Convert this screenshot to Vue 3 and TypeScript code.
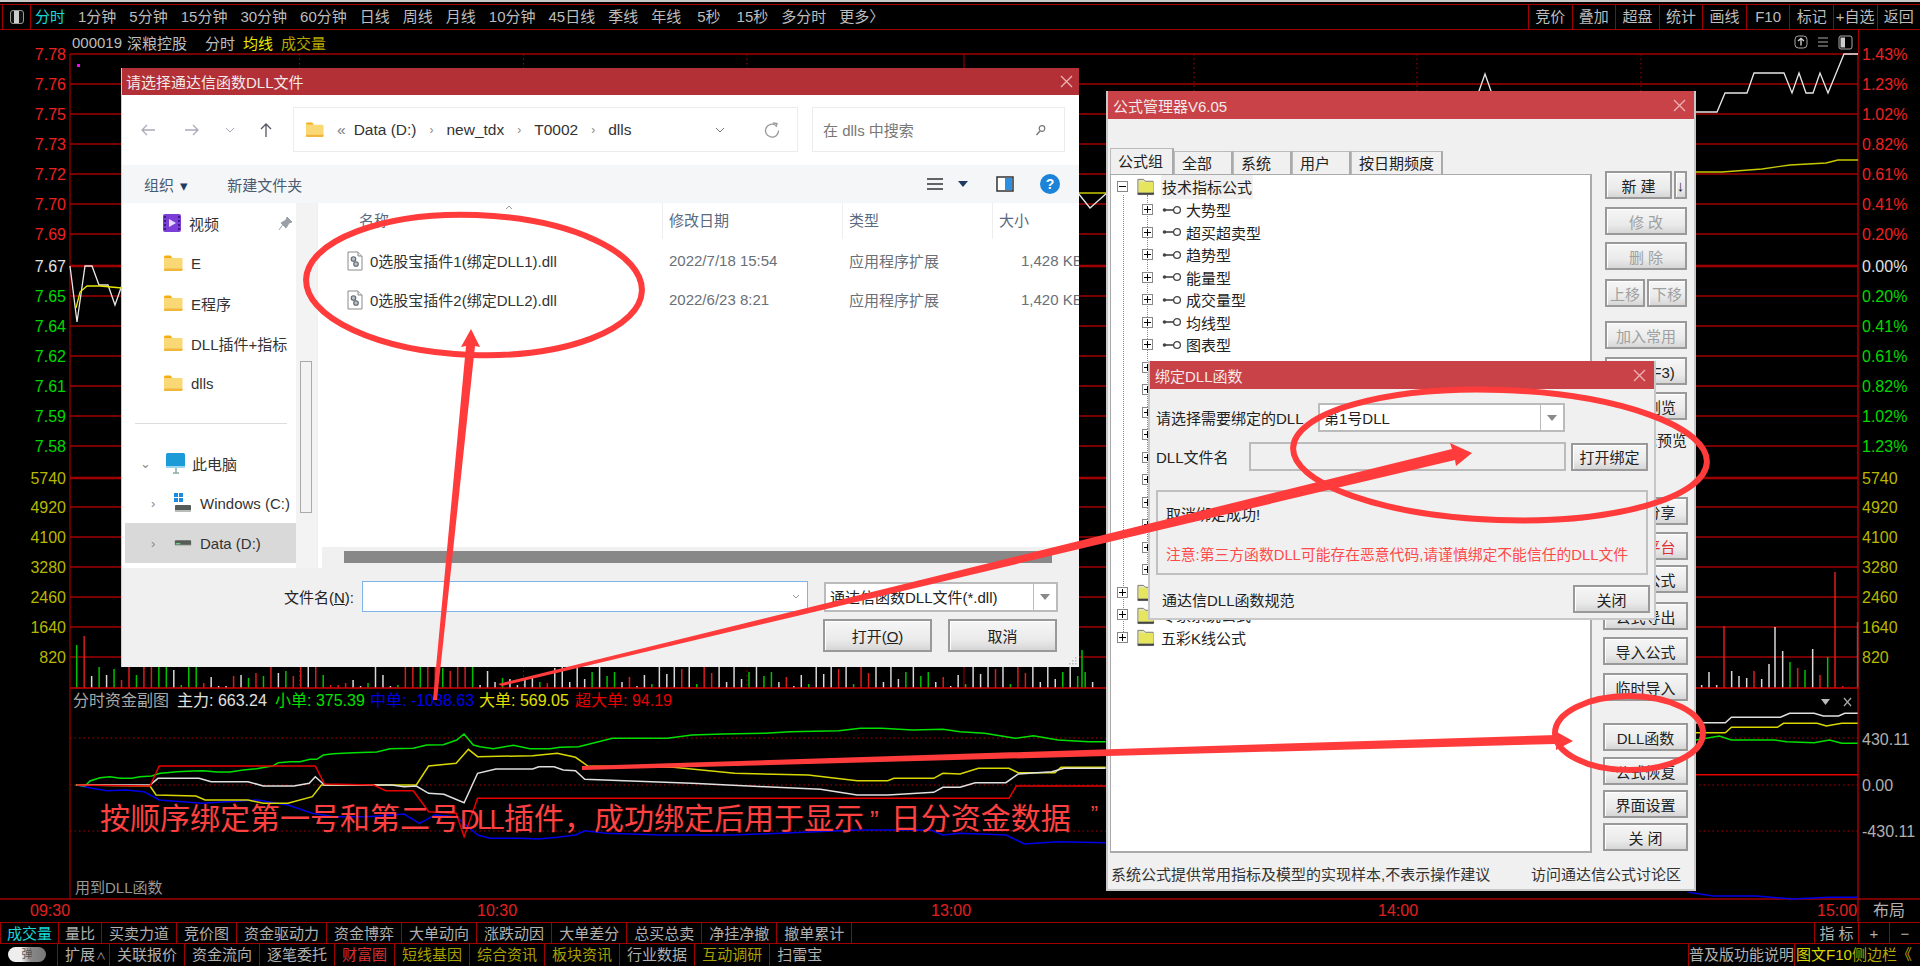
<script setup lang="ts">
type Bar = { x: number; h: number; c: string }

const navItems = ['1分钟', '5分钟', '15分钟', '30分钟', '60分钟', '日线', '周线', '月线', '10分钟', '45日线', '季线', '年线', '5秒', '15秒', '多分时', '更多〉']
const toolItems = ['竞价', '叠加', '超盘', '统计', '画线', 'F10', '标记', '+自选', '返回']

// price axis: [y, left label, right label, colour class]
const priceRows: [number, string, string, string][] = [
  [54, '7.78', '1.43%', 'up'], [84, '7.76', '1.23%', 'up'], [114, '7.75', '1.02%', 'up'],
  [144, '7.73', '0.82%', 'up'], [174, '7.72', '0.61%', 'up'], [204, '7.70', '0.41%', 'up'],
  [234, '7.69', '0.20%', 'up'], [266, '7.67', '0.00%', 'flat'], [296, '7.65', '0.20%', 'down'],
  [326, '7.64', '0.41%', 'down'], [356, '7.62', '0.61%', 'down'], [386, '7.61', '0.82%', 'down'],
  [416, '7.59', '1.02%', 'down'], [446, '7.58', '1.23%', 'down'],
]
const volRows: [number, string][] = [[478, '5740'], [507, '4920'], [537, '4100'], [567, '3280'], [597, '2460'], [627, '1640'], [657, '820']]
const dotted = [299.5, 523.5, 747, 1194, 1417, 1641]
const timeLabels: [number, string][] = [[30, '09:30'], [477, '10:30'], [931, '13:00'], [1378, '14:00'], [1817, '15:00']]

// points were read off the reference, x is squeezed by 1.633 and y by 3 in the crops
function crop(pts: number[], ox: number) {
  const out: string[] = []
  for (let i = 0; i < pts.length; i += 2) {
    out.push(`${(ox + pts[i] / 1.6333).toFixed(1)},${(660 + pts[i + 1] / 3).toFixed(1)}`)
  }
  return out.join(' ')
}
// same, for a crop that was scaled evenly
function even(pts: number[]) {
  const out: string[] = []
  for (let i = 0; i < pts.length; i += 2) {
    out.push(`${(60 + pts[i] / 3).toFixed(1)},${(660 + pts[i + 1] / 3).toFixed(1)}`)
  }
  return out.join(' ')
}
const greenLeft = even([47,375,75,378,90,363,120,353,150,350,180,355,215,355,240,350,275,348,300,340,320,338,350,335,400,333,430,332,470,336,510,336,550,330,590,326,640,317,655,308,690,305,720,305,750,298,770,298,790,285,820,281,880,278,950,276,990,266,1060,265,1100,255,1150,254,1190,240,1212,222,1240,255,1260,260,1300,266,1360,256,1410,266,1470,266,1500,262])
const greenRest = crop([945,260,1000,235,1090,235,1130,225,1180,222,1250,220,1290,215,1370,212,1405,205,1440,205,1490,210,1540,208,1568,215,1608,220,1658,235,1688,227,1728,240,1778,245,1806,245], 0)

const subLines = [
  { c: '#0000e8', p: crop([125,375,150,385,175,392,205,390,235,395,260,420,330,430,420,420,470,435,510,460,545,470,600,470,660,462,685,490,710,465,745,470,780,525,800,535,850,535,880,537,910,532,940,525,955,512,990,520,1080,525,1200,525,1400,510,1520,510,1540,525,1568,520,1643,525,1673,552,1728,545,1806,548], 0) },
  { c: '#0000e8', p: crop([1190,697,1230,708,1300,708,1360,717,1420,712,1466,712], 960) },
  { c: '#00e000', p: `${greenLeft} ${greenRest}` },
  { c: '#00e000', p: crop([1202,240,1240,228,1260,240,1330,240,1350,245,1395,248,1420,240,1440,250,1466,250], 960) },
  { c: '#d8d800', p: crop([125,375,245,378,255,405,320,408,335,420,405,420,430,430,470,430,510,410,525,375,680,375,700,318,745,310,765,268,780,290,870,287,910,280,940,292,960,318,1100,322,1200,340,1320,345,1400,362,1450,362,1460,355,1525,355,1540,340,1568,342,1598,325,1648,325,1663,338,1723,338,1733,322,1806,322], 0) },
  { c: '#d8d800', p: crop([1202,218,1250,218,1260,202,1335,202,1345,190,1400,190,1415,198,1440,190,1466,190], 960) },
  { c: '#e0e0e0', p: crop([125,375,245,375,258,355,325,355,345,365,405,365,430,378,480,378,505,370,515,350,530,375,640,375,660,380,680,378,700,400,725,403,758,428,780,340,810,327,870,327,880,320,905,320,920,330,940,332,955,358,1020,362,1130,370,1250,380,1340,388,1400,405,1450,405,1525,397,1540,382,1568,382,1593,368,1643,368,1663,342,1718,335,1738,325,1806,325], 0) },
  { c: '#e0e0e0', p: crop([1202,188,1250,188,1260,172,1340,172,1355,160,1395,160,1410,168,1435,168,1445,160,1466,160], 960) },
  { c: '#e80000', p: crop([125,375,245,378,260,318,515,318,530,372,610,375,630,392,675,392,690,430,700,455,745,460,758,530,780,415,1648,415,1660,378,1806,378], 0) },
  { c: '#e80000', p: crop([1202,344,1466,344], 960) },
]

const priceLines = [
  { c: '#e8e8e8', p: '70,266 77,322 85,266 92,266 99,285 108,285 115,305 122,285' },
  { c: '#e8e800', p: '76,308 80,292 87,286 100,286 122,288' },
  { c: '#e8e8e8', p: '1078,193 1090,208 1108,192' },
  { c: '#e8e800', p: '1078,193 1108,193' },
  { c: '#e8e8e8', p: '1470,120 1479,91 1485,74 1491,91 1500,120' },
  { c: '#e8e8e8', p: '1695,112 1717,112 1725,93 1747,93 1754,73 1784,73 1792,93 1799,73 1806,93 1813,93 1820,73 1828,93 1844,54 1858,54' },
  { c: '#c8c800', p: '1695,172 1722,172 1762,169 1790,165 1826,163 1838,160 1858,160' },
]

const colors: Record<string, string> = { w: '#d8d8d8', r: '#d81e1e', g: '#00c000' }
// first stretch of the volume bars, colour + height
const leftBars = 'g43 r52 w12 g21 w13 g19 r8 r25 g13 r25 r25 g25 g25 w18 g3 g25 g25 r5 w11 w2 w2 r12 w13 g10 r15 g12 r25 w15 g17 r12 r22 w25 r25 g13 r3 r3 r5 w8 w2 g5 w25 w13 w2 g3 r25 r25 g25 r25 r25 g20 r17 r25 r25 g25 w3 w17 w6 g10 w9 w3 w10 w12 g6 r5 w20'
  .split(' ')
const bars: Bar[] = leftBars.map((b, i) => ({ x: 76.7 + 7.47 * i, h: +b.slice(1), c: colors[b[0]] }))
let seed = 37
for (let i = leftBars.length; i < 137; i++) {
  seed = (seed * 73 + 19) % 211
  bars.push({ x: 76.7 + 7.47 * i, h: 2 + (seed % 24), c: colors['wrgw'[seed % 4]] })
}
bars.push({ x: 1082, h: 38, c: colors.g })
const rightBars: [number, number, string][] = [[65,3,'w'],[87,16,'w'],[110,3,'w'],[132,62,'r'],[155,17,'w'],[177,12,'w'],[200,10,'w'],[222,17,'r'],[245,9,'w'],[267,24,'w'],[285,61,'w'],[308,37,'w'],[330,26,'g'],[353,20,'r'],[375,18,'g'],[398,39,'w'],[420,13,'r'],[443,31,'g'],[465,116,'r'],[488,2,'r'],[533,66,'w']]
for (const [z, h, c] of rightBars) bars.push({ x: 1680 + z / 3, h, c: colors[c] })

const subTabs = ['成交量', '量比', '买卖力道', '竞价图', '资金驱动力', '资金博弈', '大单动向', '涨跌动因', '大单差分', '总买总卖', '净挂净撤', '撤单累计']
const bottomTabs: [string, string][] = [['关联报价', ''], ['资金流向', ''], ['逐笔委托', ''], ['财富圈', 'red'], ['短线基因', 'olive'], ['综合资讯', 'olive'], ['板块资讯', 'olive'], ['行业数据', ''], ['互动调研', 'olive'], ['扫雷宝', '']]

// file dialog
const crumbs = ['Data (D:)', 'new_tdx', 'T0002', 'dlls']
const files = [
  { name: '0选股宝插件1(绑定DLL1).dll', date: '2022/7/18 15:54', size: '1,428 KB' },
  { name: '0选股宝插件2(绑定DLL2).dll', date: '2022/6/23 8:21', size: '1,420 KB' },
]
const quickFolders = ['E', 'E程序', 'DLL插件+指标', 'dlls']

// formula manager button column, gap is the space above each row
type MgrBtn = { label: string; off?: boolean; red?: boolean; cls?: string }
const mgrRows: { gap: number; wide?: boolean; btns: MgrBtn[] }[] = [
  { gap: 52, btns: [{ label: '新 建', cls: 'b-new' }, { label: '↓', cls: 'b-arrow' }] },
  { gap: 8, btns: [{ label: '修 改', off: true }] },
  { gap: 7, btns: [{ label: '删 除', off: true }] },
  { gap: 9, btns: [{ label: '上移', off: true, cls: 'b-half' }, { label: '下移', off: true, cls: 'b-half' }] },
  { gap: 14, btns: [{ label: '加入常用', off: true }] },
  { gap: 8, btns: [{ label: '查找(F3)' }] },
  { gap: 7, btns: [{ label: '公式浏览' }] },
  { gap: 77, wide: true, btns: [{ label: '公式分享' }] },
  { gap: 7, wide: true, btns: [{ label: '公式平台', red: true }] },
  { gap: 5, wide: true, btns: [{ label: '打印公式' }] },
  { gap: 9, wide: true, btns: [{ label: '公式导出' }] },
  { gap: 7, wide: true, btns: [{ label: '导入公式' }] },
  { gap: 8, wide: true, btns: [{ label: '临时导入' }] },
  { gap: 22, wide: true, btns: [{ label: 'DLL函数' }] },
  { gap: 6, wide: true, btns: [{ label: '公式恢复' }] },
  { gap: 5, wide: true, btns: [{ label: '界面设置' }] },
  { gap: 5, wide: true, btns: [{ label: '关 闭' }] },
]

const treeChildren = ['大势型', '超买超卖型', '趋势型', '能量型', '成交量型', '均线型', '图表型', '路径型', '停损型', '交易型', '神系型', '龙系型', '鬼系型', '其它类型', '特色型', '选股型', '指标型']
const treeFolders = ['条件选股公式', '专家系统公式', '五彩K线公式']
</script>

<template>
  <div class="page">
    <svg class="defs" width="0" height="0">
      <symbol id="win-folder" viewBox="0 0 20 18">
        <path d="M1 3 a1.5 1.5 0 0 1 1.5-1.5 h5 l2 2.5 H1z" fill="#f4ae14" />
        <path d="M1 4 h17.5 a1 1 0 0 1 1 1 v10.5 a1.5 1.5 0 0 1-1.5 1.5 H2.5 A1.5 1.5 0 0 1 1 15.5z" fill="#fbd876" />
        <path d="M1 14.5 h18.5 v1 a1.5 1.5 0 0 1-1.5 1.5 H2.5 A1.5 1.5 0 0 1 1 15.5z" fill="#f1b53d" />
      </symbol>
      <symbol id="old-folder" viewBox="0 0 20 20">
        <path d="M2 5 V3 h6 l2 2 h8 v14 H2z" fill="#e4e4a4" stroke="#777" stroke-width="1" />
        <rect x="3" y="6" width="15" height="11" fill="#e6e65e" />
        <rect x="2" y="17" width="17" height="2" fill="#444" />
      </symbol>
      <symbol id="key" viewBox="0 0 20 10">
        <circle cx="2.5" cy="5" r="1.8" fill="#444" />
        <path d="M3 5 h10" stroke="#444" stroke-width="1.6" />
        <circle cx="15" cy="5" r="3.4" fill="#fff" stroke="#444" stroke-width="1.3" />
      </symbol>
      <symbol id="dll-file" viewBox="0 0 16 20">
        <path d="M1 1 h10 l4 4 v14 H1z" fill="#fff" stroke="#8a8a8a" />
        <path d="M11 1 v4 h4" fill="#eee" stroke="#8a8a8a" />
        <circle cx="6.5" cy="8" r="2.3" fill="#b8bec6" stroke="#606870" stroke-width="1.1" />
        <circle cx="9" cy="13" r="2.3" fill="#b8bec6" stroke="#606870" stroke-width="1.1" />
      </symbol>
      <symbol id="drive" viewBox="0 0 20 8">
        <rect x="1" y="1" width="18" height="6" rx="1" fill="#565c58" />
        <rect x="2" y="4" width="5" height="1.5" fill="#6fd084" />
        <rect x="1" y="6" width="18" height="1.5" fill="#b9bdb9" />
      </symbol>
    </svg>

    <!-- top menu -->
    <header class="toolbar">
      <div class="tb-icon"><span class="tb-glyph"></span></div>
      <nav class="tb-nav">
        <span class="tb-active">分时</span>
        <span v-for="n in navItems" :key="n">{{ n }}</span>
      </nav>
      <div class="tb-tools">
        <span v-for="t in toolItems" :key="t">{{ t }}</span>
      </div>
    </header>

    <div class="quote-row">
      <span>000019</span>
      <span class="q-name">深粮控股</span>
      <span class="q-gap">分时</span>
      <span class="q-gap2 q-yellow">均线</span>
      <span class="q-gap2 q-olive">成交量</span>
      <div class="q-icons">
        <svg width="14" height="14" viewBox="0 0 14 14"><rect x="1" y="1" width="12" height="12" rx="3.5" fill="none" stroke="#aaa" /><path d="M7 3.5 V10.5 M4 6 L7 3.500 L10 6" fill="none" stroke="#ccc" stroke-width="1.4" /></svg>
        <svg width="12" height="12" viewBox="0 0 12 12"><path d="M1 2 H11 M1 6 H11 M1 10 H11" stroke="#aaa" stroke-width="1.2" /></svg>
        <svg width="15" height="15" viewBox="0 0 15 15"><rect x="1" y="1" width="13" height="13" rx="2" fill="none" stroke="#aaa" /><rect x="2.5" y="2.5" width="4.5" height="10" fill="#ccc" /></svg>
      </div>
    </div>

    <!-- chart canvas, drawn in page coordinates -->
    <svg class="chart" viewBox="0 54 1920 868" width="1920" height="868">
      <g stroke="#a00000">
        <line v-for="r in priceRows" :key="r[0]" x1="70" x2="1858" :y1="r[0]" :y2="r[0]" :stroke-width="r[0] === 266 ? 2.5 : 1.5" />
        <line v-for="r in volRows" :key="r[1]" x1="70" x2="1858" :y1="r[0]" :y2="r[0]" :stroke-width="r[0] === 478 ? 2.5 : 1.5" />
      </g>
      <g stroke="#b00000" stroke-dasharray="1.5 3">
        <line v-for="x in dotted" :key="x" :x1="x" :x2="x" y1="54" y2="688" />
        <line x1="70" x2="1858" y1="738" y2="738" />
        <line x1="70" x2="1858" y1="785" y2="785" />
        <line x1="70" x2="1858" y1="831" y2="831" />
      </g>
      <line x1="964" x2="964" y1="54" y2="688" stroke="#a00000" />
      <line v-for="(b, i) in bars" :key="i" :x1="b.x" :x2="b.x" :y1="688" :y2="688 - b.h" :stroke="b.c" stroke-width="1.5" />
      <line x1="70" x2="1858" y1="688" y2="688" stroke="#d00000" stroke-width="1.5" />
      <line x1="0" x2="1920" y1="899" y2="899" stroke="#a00000" stroke-width="1.5" />
      <line x1="70" x2="70" y1="54" y2="899" stroke="#a00000" stroke-width="1.2" />
      <line x1="1858" x2="1858" y1="54" y2="922" stroke="#a00000" stroke-width="1.5" />
      <polyline v-for="(l, i) in priceLines" :key="i" :points="l.p" fill="none" :stroke="l.c" stroke-width="1.3" />
      <polyline v-for="(l, i) in subLines" :key="i" :points="l.p" fill="none" :stroke="l.c" stroke-width="1.5" />
      <rect x="77" y="64" width="3" height="3" fill="#ff00ff" />

      <g class="ax">
        <template v-for="r in priceRows" :key="r[0]">
          <text x="66" :y="r[0] + 6" text-anchor="end" :class="r[3]">{{ r[1] }}</text>
          <text x="1862" :y="r[0] + 6" :class="r[3]">{{ r[2] }}</text>
        </template>
        <template v-for="r in volRows" :key="r[1]">
          <text x="66" :y="r[0] + 6" text-anchor="end" class="vol">{{ r[1] }}</text>
          <text x="1862" :y="r[0] + 6" class="vol">{{ r[1] }}</text>
        </template>
        <text x="1862" y="745" class="flat2">430.11</text>
        <text x="1862" y="791" class="flat2">0.00</text>
        <text x="1862" y="837" class="flat2">-430.11</text>
        <text v-for="t in timeLabels" :key="t[1]" :x="t[0]" y="916" class="time">{{ t[1] }}</text>
        <text x="1873" y="916" class="flat2">布局</text>
        <text y="706" class="sub-h">
          <tspan x="73" fill="#a8a8a8">分时资金副图</tspan>
          <tspan x="177" fill="#e0e0e0">主力: 663.24</tspan>
          <tspan x="275" fill="#00e000">小单: 375.39</tspan>
          <tspan x="370" fill="#0000e8">中单: -1038.63</tspan>
          <tspan x="479" fill="#e0e000">大单: 569.05</tspan>
          <tspan x="575" fill="#e80000">超大单: 94.19</tspan>
        </text>
        <text x="75" y="893" class="flat3">用到DLL函数</text>
      </g>
      <path d="M1821 699 h9 l-4.5 6z" fill="#bbb" />
      <path d="M1844 698 l7 8 M1851 698 l-7 8" stroke="#aaa" stroke-width="1.2" />
    </svg>

    <div class="tabs">
      <span v-for="(t, i) in subTabs" :key="t" :class="{ 'tab-on': i === 0 }">{{ t }}</span>
      <span class="tabs-end">指 标</span>
      <span class="tabs-sq">+</span>
      <span class="tabs-sq">−</span>
    </div>

    <div class="bottom">
      <div class="toggle"><span class="toggle-knob">弹</span></div>
      <span class="b-first">扩展<small>∧</small></span>
      <span v-for="t in bottomTabs" :key="t[0]" :class="t[1]">{{ t[0] }}</span>
      <div class="b-right">
        <span>普及版功能说明</span>
        <span class="yellow">图文F10</span><span class="olive2">侧边栏</span><span class="olive2">《</span>
      </div>
    </div>

    <!-- file open dialog -->
    <section class="win file-win">
      <div class="title dark"><span>请选择通达信函数DLL文件</span><svg class="x" width="13" height="13" viewBox="0 0 13 13"><path d="M1 1 L12 12 M12 1 L1 12" /></svg></div>
      <div class="fw-nav">
        <svg class="n-back" width="16" height="14" viewBox="0 0 16 14"><path d="M15 7 H2 M7 2 L2 7 L7 12" fill="none" stroke="#aab" stroke-width="1.3" /></svg>
        <svg class="n-fwd" width="16" height="14" viewBox="0 0 16 14"><path d="M1 7 H14 M9 2 L14 7 L9 12" fill="none" stroke="#aab" stroke-width="1.3" /></svg>
        <svg class="n-down" width="10" height="6" viewBox="0 0 10 6"><path d="M1 1 L5 5 L9 1" fill="none" stroke="#aab" /></svg>
        <svg class="n-up" width="14" height="16" viewBox="0 0 14 16"><path d="M7 15 V2 M2 7 L7 2 L12 7" fill="none" stroke="#556" stroke-width="1.3" /></svg>
        <div class="addr">
          <svg width="19" height="17"><use href="#win-folder" /></svg>
          <span class="ad-more">«</span>
          <template v-for="(c, i) in crumbs" :key="c">
            <span class="crumb">{{ c }}</span>
            <i v-if="i < crumbs.length - 1" class="sep">›</i>
          </template>
          <svg class="ad-drop" width="10" height="6" viewBox="0 0 10 6"><path d="M1 1 L5 5 L9 1" fill="none" stroke="#778" /></svg>
          <svg class="ad-ref" width="16" height="18" viewBox="0 0 16 18"><path d="M12 4.5 A6.5 6.5 0 1 0 14.5 9.5" fill="none" stroke="#999" stroke-width="1.3" /><path d="M9 2 L13 2.5 L12 6" fill="none" stroke="#999" stroke-width="1.3" /></svg>
        </div>
        <div class="search">
          <span>在 dlls 中搜索</span>
          <svg width="11" height="12" viewBox="0 0 11 12"><circle cx="7" cy="4.5" r="2.8" fill="none" stroke="#777" stroke-width="1.2" /><path d="M5 7 L1.5 11" stroke="#777" stroke-width="1.4" /></svg>
        </div>
      </div>
      <div class="fw-tools">
        <span>组织 <i class="tri">▾</i></span>
        <span class="new-folder">新建文件夹</span>
        <div class="fw-tools-r">
          <svg width="16" height="14" viewBox="0 0 16 14"><path d="M0 2 H16 M0 7 H16 M0 12 H16" stroke="#333" stroke-width="1.6" /></svg>
          <svg class="t-arrow" width="10" height="6" viewBox="0 0 10 6"><path d="M0 0 H10 L5 6z" fill="#1f3b63" /></svg>
          <svg class="t-pane" width="18" height="16" viewBox="0 0 18 16"><rect x="1" y="1" width="16" height="14" fill="#fff" stroke="#333" stroke-width="1.5" /><rect x="9" y="2" width="7" height="12" fill="#2d8fe0" /></svg>
          <svg class="t-help" width="20" height="20" viewBox="0 0 20 20"><circle cx="10" cy="10" r="10" fill="#1b84d8" /><text x="10" y="15" text-anchor="middle" class="t-q">?</text></svg>
        </div>
      </div>
      <div class="fw-body">
        <aside class="side">
          <div class="s-row s-quick">
            <svg width="18" height="18" viewBox="0 0 18 18"><rect width="18" height="18" rx="2" fill="#7b3fd8" /><path d="M6 5 L13 9 L6 13z" fill="#e8dcff" /><path d="M2 2 V16 M16 2 V16" stroke="#3a1c80" stroke-width="2" stroke-dasharray="2 2" /></svg>
            <span>视频</span>
            <svg class="pin" width="13" height="13" viewBox="0 0 13 13"><path d="M8 0 L13 5 L10 6 L7 11 L2 6 L7 3z M3.5 8 L0 13" fill="#9aa0a6" stroke="#9aa0a6" /></svg>
          </div>
          <div v-for="f in quickFolders" :key="f" class="s-row s-quick">
            <svg width="20" height="18"><use href="#win-folder" /></svg>
            <span>{{ f }}</span>
          </div>
          <div class="s-row s-div"><hr /></div>
          <div class="s-row s-pc">
            <i class="chev">⌄</i>
            <svg width="21" height="21" viewBox="0 0 21 21"><rect x="1" y="0" width="19" height="15" rx="1.5" fill="#1d9bd8" /><rect x="1" y="13" width="19" height="2" fill="#9fd6ef" /><path d="M8 20 H14 M11 15 V20" stroke="#8aa" stroke-width="1.5" /></svg>
            <span>此电脑</span>
          </div>
          <div class="s-row s-drive">
            <i class="chev">›</i>
            <svg width="18" height="20" viewBox="0 0 18 20"><g fill="#1a8ce0"><rect x="0" y="0" width="4" height="4" /><rect x="5" y="0" width="4" height="4" /><rect x="0" y="5" width="4" height="4" /><rect x="5" y="5" width="4" height="4" /></g><rect x="1" y="12" width="16" height="6" rx="1" fill="#565c58" /><rect x="1" y="17" width="16" height="2" fill="#b9bdb9" /></svg>
            <span>Windows (C:)</span>
          </div>
          <div class="s-row s-drive s-sel">
            <i class="chev">›</i>
            <svg width="18" height="8"><use href="#drive" /></svg>
            <span>Data (D:)</span>
          </div>
        </aside>
        <div class="side-track"><span class="side-thumb"></span></div>
        <div class="list">
          <div class="l-head">
            <span class="h-name">名称</span><span>修改日期</span><span>类型</span><span>大小</span>
            <svg class="sort" width="8" height="5" viewBox="0 0 8 5"><path d="M1 4 L4 1 L7 4" fill="none" stroke="#999" /></svg>
          </div>
          <div v-for="f in files" :key="f.name" class="l-row">
            <span class="r-name"><svg width="16" height="20"><use href="#dll-file" /></svg><b>{{ f.name }}</b></span>
            <span>{{ f.date }}</span>
            <span>应用程序扩展</span>
            <span class="r-size">{{ f.size }}</span>
          </div>
          <div class="h-track"><span class="h-thumb"></span></div>
        </div>
      </div>
      <div class="fw-foot">
        <div class="ff-row">
          <label>文件名(<u>N</u>):</label>
          <div class="ff-input"><svg width="8" height="5" viewBox="0 0 8 5"><path d="M1 1 L4 4 L7 1" fill="none" stroke="#999" /></svg></div>
          <div class="combo ff-type"><span>通达信函数DLL文件(*.dll)</span><i class="combo-btn"><em></em></i></div>
        </div>
        <div class="ff-btns">
          <button class="btn">打开(<u>O</u>)</button>
          <button class="btn">取消</button>
        </div>
        <svg class="grip" width="9" height="9" viewBox="0 0 9 9"><path d="M7 1 h1.5 v1.5 h-1.5z M4 4 h1.5 v1.5 h-1.5z M7 4 h1.5 v1.5 h-1.5z M1 7 h1.5 v1.5 h-1.5z M4 7 h1.5 v1.5 h-1.5z M7 7 h1.5 v1.5 h-1.5z" fill="#bbb" /></svg>
      </div>
    </section>

    <!-- formula manager -->
    <section class="win mgr">
      <div class="title"><span>公式管理器V6.05</span><svg class="x" width="13" height="13" viewBox="0 0 13 13"><path d="M1 1 L12 12 M12 1 L1 12" /></svg></div>
      <div class="mgr-body">
        <div class="mgr-left">
          <div class="m-tabs">
            <span class="m-tab on">公式组</span><span class="m-tab">全部</span><span class="m-tab">系统</span><span class="m-tab">用户</span><span class="m-tab">按日期频度</span>
          </div>
          <div class="tree">
            <i class="dots d1"></i><i class="dots d2"></i>
            <div class="t-row t-root t-first">
              <span class="box minus"></span>
              <svg width="19" height="20"><use href="#old-folder" /></svg>
              <span class="t-sel">技术指标公式</span>
            </div>
            <div v-for="c in treeChildren" :key="c" class="t-row t-child">
              <span class="box plus"></span>
              <svg width="20" height="10"><use href="#key" /></svg>
              <span>{{ c }}</span>
            </div>
            <div v-for="c in treeFolders" :key="c" class="t-row t-root">
              <span class="box plus"></span>
              <svg width="19" height="20"><use href="#old-folder" /></svg>
              <span>{{ c }}</span>
            </div>
          </div>
        </div>
        <div class="mgr-btns">
          <div v-for="(row, i) in mgrRows" :key="i" class="m-row" :class="{ wide: row.wide }" :style="{ marginTop: row.gap + 'px' }">
            <button v-for="b in row.btns" :key="b.label" class="btn" :class="[b.cls, { off: b.off, redtxt: b.red }]">{{ b.label }}</button>
          </div>
          <span class="preview">指标预览</span>
        </div>
      </div>
      <div class="mgr-foot">
        <span>系统公式提供常用指标及模型的实现样本,不表示操作建议</span>
        <span>访问通达信公式讨论区</span>
      </div>
    </section>

    <!-- bind dialog -->
    <section class="win bind">
      <div class="title"><span>绑定DLL函数</span><svg class="x" width="13" height="13" viewBox="0 0 13 13"><path d="M1 1 L12 12 M12 1 L1 12" /></svg></div>
      <div class="bind-body">
        <div class="b-row r1">
          <label class="l1">请选择需要绑定的DLL</label>
          <div class="combo b-combo"><span>第1号DLL</span><i class="combo-btn"><em></em></i></div>
        </div>
        <div class="b-row r2">
          <label class="l2">DLL文件名</label>
          <div class="b-field"></div>
          <button class="btn b-open">打开绑定</button>
        </div>
        <div class="b-group">
          <span>取消绑定成功!</span>
          <span class="warn">注意:第三方函数DLL可能存在恶意代码,请谨慎绑定不能信任的DLL文件</span>
        </div>
        <div class="b-foot">
          <span>通达信DLL函数规范</span>
          <button class="btn b-open">关闭</button>
        </div>
      </div>
    </section>

    <!-- hand-drawn marks over everything -->
    <svg class="marks" width="1920" height="966" viewBox="0 0 1920 966">
      <g fill="none" stroke="#ff3b3b" stroke-width="6">
        <ellipse cx="474" cy="285" rx="168" ry="70" transform="rotate(2 474 285)" />
        <ellipse cx="1500" cy="455" rx="207" ry="65" transform="rotate(2 1500 455)" />
        <ellipse cx="1629" cy="733" rx="74" ry="37" />
      </g>
      <g fill="#ff3b3b">
        <path d="M433 700 L466 346 L461 347 L471 329 L480 347 L475 346 L437 700z" />
        <path d="M498 684 L1452 449 L1450 443 L1472 453 L1456 466 L1455 460 L502 686z" />
        <path d="M582 766 L1556 735 L1555 731 L1573 741 L1556 750 L1556 744 L582 770z" />
      </g>
    </svg>
    <div class="headline">按顺序绑定第一号和第二号<span class="h-dll">DLL</span>插件，成功绑定后用于显示<span class="h-q">”</span>日分资金数据<span class="h-q2">”</span></div>
  </div>
</template>

<style>
html, body { margin: 0; background: #000; }
</style>

<style scoped>
.page {
  position: relative;
  width: 1920px;
  height: 966px;
  overflow: hidden;
  background: #000;
  color: #bdbdbd;
  font: 15px "Liberation Sans", "Noto Sans CJK SC", sans-serif;
  border-top: 2px solid #c8c8c8;
  box-sizing: border-box;
}
.defs { position: absolute; }

.toolbar {
  display: flex;
  box-sizing: border-box;
  height: 26px;
  margin-top: 2px;
  border-top: 1.5px solid #a00000;
  border-bottom: 1.5px solid #a00000;
  white-space: nowrap;
  line-height: 23px;
}
.tb-icon {
  width: 29px;
  margin-left: 2px;
  box-sizing: border-box;
  border-left: 1px solid #a00000;
  border-right: 1.5px solid #a00000;
  display: flex;
  align-items: center;
  justify-content: center;
}
.tb-glyph {
  width: 14px;
  height: 14px;
  box-sizing: border-box;
  border: 1.5px solid #999;
  border-radius: 3px;
  background: linear-gradient(90deg, #111 0 3px, #ccc 3px 8px, #111 8px);
}
.tb-nav { display: flex; gap: 13px; padding-left: 4px; }
.tb-nav span:nth-child(14), .tb-nav span:nth-child(15) { margin-left: 3px; }
.tb-active { color: #19d8d8; }
.tb-tools { margin-left: auto; width: 392px; display: flex; }
.tb-tools span { flex: 1; text-align: center; border-left: 1px solid #a00000; }

.quote-row {
  display: flex;
  align-items: center;
  height: 24px;
  padding-left: 72px;
  padding-right: 61px;
  color: #bdbdbd;
}
.q-name { margin-left: 5px; }
.q-gap { margin-left: 18px; }
.q-gap2 { margin-left: 8px; }
.q-yellow { color: #e8e800; }
.q-olive { color: #b8a800; }
.q-icons {
  margin-left: auto;
  height: 24px;
  display: flex;
  align-items: center;
  gap: 9px;
  box-sizing: border-box;
  border-right: 1.5px solid #a00000;
  padding-right: 5px;
}

.chart { display: block; overflow: visible; }
.ax text { font-size: 16px; }
.ax .up { fill: #ee2020; }
.ax .flat { fill: #e0e0e0; }
.ax .down { fill: #00d800; }
.ax .vol { fill: #b8b800; }
.ax .flat2 { fill: #b0b0b0; }
.ax .flat3 { fill: #999; font-size: 15px; }
.ax .time { fill: #e02020; }

.tabs, .bottom {
  display: flex;
  box-sizing: border-box;
  height: 22px;
  white-space: nowrap;
  line-height: 21px;
}
.tabs { border-top: 1.5px solid #a00000; border-bottom: 1.5px solid #a00000; }
.tabs > span { padding: 0 7px; border-left: 1px solid #a00000; color: #b0b0b0; }
.tabs > span.tab-on { color: #19d8d8; padding: 0 6px; }
.tabs > span:nth-child(2) { padding: 0 6px; }
.tabs > span:nth-child(12) { border-right: 1px solid #a00000; }
.tabs > span.tabs-end { margin-left: auto; width: 44px; box-sizing: border-box; text-align: center; padding: 0; }
.tabs > span.tabs-sq { width: 31px; box-sizing: border-box; padding: 0; text-align: center; }

.bottom > span { padding: 0 7px; border-left: 1px solid #a00000; color: #b0b0b0; }
.bottom small { font-size: 10px; margin-left: 1px; }
.bottom > .b-first { width: 52px; box-sizing: border-box; }
.bottom > .red { color: #d83030; }
.bottom > .olive { color: #a8a000; }
.toggle {
  display: flex;
  align-items: flex-start;
  width: 55px;
  padding: 3px 0 0 6px;
  box-sizing: border-box;
  margin-left: 2px;
}
.toggle-knob {
  width: 38px;
  height: 15px;
  border-radius: 8px;
  background: linear-gradient(90deg, #eee 0 35%, #888 60%, #777);
  font-size: 11px;
  line-height: 15px;
  text-align: center;
  color: #555;
}
.b-right { margin-left: auto; display: flex; width: 231px; overflow: hidden; border-left: 1px solid #a00000; color: #b0b0b0; }
.b-right .yellow { border-left: 1px solid #a00000; padding-left: 1px; color: #d8d800; }
.b-right .olive2 { color: #b8a800; }

/* windows */
.win { position: absolute; background: #f0f0f0; color: #222; box-sizing: border-box; }
.title {
  display: flex;
  align-items: center;
  justify-content: space-between;
  height: 28px;
  padding: 0 8px 0 5px;
  background: #c94248;
  color: #f2eaea;
  box-sizing: border-box;
  flex: none;
}
.title.dark { background: #b33036; height: 27px; padding: 0 6px 0 4px; }
.x { stroke: #eeb4b4; stroke-width: 1.3; }

.btn {
  font: inherit;
  color: #222;
  padding: 0;
  box-sizing: border-box;
  border: 2px solid #999;
  background: linear-gradient(#f6f6f6, #eaeaea 65%, #d6d6d6);
  box-shadow: inset 1px 1px 0 #fff;
}
.btn.off { color: #a0a0a0; }
.btn u { text-decoration: underline; }

.combo {
  display: flex;
  box-sizing: border-box;
  background: #fff;
  border: 2px solid #bbb;
  align-items: center;
  padding-left: 4px;
  white-space: nowrap;
  overflow: hidden;
}
.combo span { flex: 1; overflow: hidden; }
.combo-btn {
  width: 22px;
  align-self: stretch;
  border-left: 1px solid #bbb;
  display: flex;
  align-items: center;
  justify-content: center;
  flex: none;
}
.combo-btn em { border: 5px solid transparent; border-top: 6px solid #888; border-bottom: 0; }

/* file dialog */
.file-win {
  left: 121px;
  top: 66px;
  width: 958px;
  height: 599px;
  display: flex;
  flex-direction: column;
  border-left: 1px solid #ccc;
}
.fw-nav { display: flex; align-items: center; height: 70px; box-sizing: border-box; padding-bottom: 1px; background: #fff; flex: none; }
.n-back { margin-left: 18px; }
.n-fwd { margin-left: 28px; }
.n-down { margin-left: 25px; }
.n-up { margin-left: 24px; }
.addr {
  display: flex;
  align-items: center;
  margin-left: 20px;
  width: 505px;
  height: 45px;
  box-sizing: border-box;
  border: 1.5px solid #ececec;
  padding: 0 17px 0 11px;
  gap: 13px;
  font-size: 15.5px;
  color: #333;
}
.ad-more { color: #777; margin-right: -5px; }
.sep { color: #888; font-size: 12px; font-style: normal; }
.ad-drop { margin-left: auto; }
.ad-ref { margin-left: 26px; }
.search {
  display: flex;
  align-items: center;
  justify-content: space-between;
  margin-left: 14px;
  width: 253px;
  height: 45px;
  box-sizing: border-box;
  border: 1.5px solid #ececec;
  padding: 0 18px 0 10px;
  color: #777;
}
.fw-tools {
  display: flex;
  align-items: center;
  height: 38px;
  flex: none;
  background: #f5f6f7;
  padding-left: 22px;
  color: #4a5a72;
}
.tri { font-style: normal; font-size: 15px; color: #1f3b63; margin-left: 2px; }
.new-folder { margin-left: 39px; }
.fw-tools-r { margin-left: auto; display: flex; align-items: center; padding-right: 19px; }
.t-arrow { margin-left: 15px; }
.t-pane { margin-left: 28px; }
.t-help { margin-left: 26px; }
.t-q { fill: #fff; font: bold 14px "Liberation Sans", sans-serif; }

.fw-body { display: flex; height: 365px; flex: none; background: #fff; }
.side { width: 174px; flex: none; }
.s-row { display: flex; align-items: center; height: 40px; color: #333; white-space: nowrap; box-sizing: border-box; }
.s-quick { padding-left: 41px; gap: 8px; position: relative; }
.pin { position: absolute; right: 4px; }
.s-div hr { width: 152px; margin: 0 0 0 13px; border: 0; border-top: 1.5px solid #ddd; }
.s-pc { padding-left: 18px; }
.s-pc span { margin-left: 6px; }
.chev { font-style: normal; color: #888; font-size: 13px; width: 25px; }
.s-drive { padding-left: 29px; }
.s-drive .chev { width: 23px; }
.s-drive span { margin-left: 8px; }
.s-sel { background: #d9d9d9; margin-left: 3px; padding-left: 26px; }
.side-track { width: 21px; flex: none; background: #f3f3f3; position: relative; border-right: 1px solid #f0f0f0; }
.side-thumb {
  position: absolute;
  left: 4px;
  top: 158px;
  width: 12px;
  height: 152px;
  box-sizing: border-box;
  border: 1px solid #aaa;
  background: #f3f3f3;
}
.list { flex: 1; display: flex; flex-direction: column; overflow: hidden; position: relative; margin-left: 4px; color: #6a7078; }
.l-head, .l-row { display: grid; grid-template-columns: 341px 180px 150px 88px; flex: none; }
.l-head { height: 32px; align-items: stretch; line-height: 36px; color: #5a6a80; margin-bottom: 6px; }
.l-head span { padding-left: 6px; border-right: 1px solid #eee; }
.l-head .h-name { padding-left: 37px; }
.sort { position: absolute; left: 183px; top: 2px; }
.l-row { height: 39px; align-items: center; white-space: nowrap; }
.l-row > span { padding-left: 6px; }
.l-row > .r-name { display: flex; align-items: center; gap: 7px; padding-left: 25px; }
.r-name b { font-weight: 400; color: #333; font-size: 15px; }
.l-row > .r-size { padding-left: 28px; }
.h-track { margin-top: auto; height: 21px; background: #f0f0f0; padding: 4px 0 0 22px; box-sizing: border-box; flex: none; }
.h-thumb { display: block; width: 708px; height: 12px; background: #888; }

.fw-foot { flex: 1; position: relative; background: #f0f0f0; }
.ff-row { display: flex; align-items: center; padding: 13px 0 0 162px; }
.ff-row label { width: 78px; white-space: nowrap; }
.ff-input {
  width: 446px;
  height: 31px;
  box-sizing: border-box;
  border: 1px solid #7eb4ea;
  background: #fff;
  display: flex;
  align-items: center;
  justify-content: flex-end;
  padding-right: 7px;
}
.ff-type { width: 234px; height: 30px; margin-left: 16px; }
.ff-btns { display: flex; justify-content: flex-end; gap: 16px; padding: 7px 22px 0 0; }
.ff-btns .btn { width: 109px; height: 33px; }
.grip { position: absolute; right: 2px; bottom: 2px; }

/* formula manager */
.mgr {
  left: 1106px;
  top: 89px;
  width: 590px;
  height: 800px;
  display: flex;
  flex-direction: column;
  border: 2px solid #c8c8c8;
  border-top: 0;
}
.mgr-body { display: flex; height: 734px; flex: none; }
.mgr-left { width: 484px; padding-left: 2px; flex: none; box-sizing: border-box; }
.m-tabs { display: flex; align-items: flex-end; height: 55px; }
.m-tab {
  height: 23px;
  line-height: 24px;
  padding: 0 7px;
  box-sizing: border-box;
  background: #f0f0f0;
  border: 1px solid #bbb;
  border-bottom: 0;
  border-right-width: 2px;
  border-right-color: #aaa;
  white-space: nowrap;
}
.m-tab:nth-child(2), .m-tab:nth-child(3), .m-tab:nth-child(4) { width: 59px; }
.m-tab.on { height: 26px; width: 64px; line-height: 26px; }
.tree {
  position: relative;
  height: 679px;
  box-sizing: border-box;
  background: #fff;
  border: solid #aaa;
  border-width: 1px 2px 2px 1px;
  padding-top: 1px;
  overflow: hidden;
}
.dots { position: absolute; border-left: 1px dotted #888; }
.d1 { left: 12px; top: 20px; height: 445px; }
.d2 { left: 36px; top: 20px; height: 378px; }
.t-row { display: flex; align-items: center; height: 22.5px; white-space: nowrap; position: relative; color: #222; }
.t-first { height: 24.5px; margin-top: -2px; }
.t-root { padding-left: 6px; }
.t-child { padding-left: 31px; }
.box {
  width: 11px;
  height: 11px;
  box-sizing: border-box;
  border: 1px solid #888;
  background: #fff;
  flex: none;
  position: relative;
}
.box::before { content: ""; position: absolute; left: 1px; right: 1px; top: 4px; height: 1px; background: #000; }
.plus::after { content: ""; position: absolute; top: 1px; bottom: 1px; left: 4px; width: 1px; background: #000; }
.t-root svg { margin-left: 8px; flex: none; }
.t-root span:last-child { margin-left: 6px; }
.t-child svg { margin-left: 9px; flex: none; }
.t-child span:last-child { margin-left: 4px; }
.t-sel { background: #f0f0f0; padding: 2px 1px; }

.mgr-btns { width: 104px; position: relative; padding-left: 13px; box-sizing: border-box; }
.m-row { display: flex; justify-content: space-between; width: 82px; height: 28px; }
.m-row .btn { flex: 1; white-space: nowrap; overflow: hidden; }
.m-row.wide { width: 85px; margin-left: -2px; }
.m-row .btn.b-new { flex: none; width: 67px; }
.m-row .btn.b-arrow { flex: none; width: 13px; font-size: 15px; }
.m-row .btn.b-half { flex: none; width: 40px; }
.redtxt { color: #e03030; }
.preview { position: absolute; left: 13px; top: 310px; width: 82px; text-align: right; white-space: nowrap; color: #222; }
.mgr-foot { display: flex; justify-content: space-between; padding: 10px 13px 0 3px; white-space: nowrap; color: #333; }

/* bind dialog */
.bind { left: 1148px; top: 359px; width: 508px; height: 259px; border: 2px solid #c8c8c8; border-top: 0; }
.bind-body { padding: 0 6px; }
.b-row { display: flex; align-items: center; height: 29px; white-space: nowrap; }
.r1 { margin-top: 14px; }
.r2 { margin-top: 10px; }
.l1 { width: 162px; }
.l2 { width: 93px; }
.b-combo { width: 247px; height: 29px; }
.b-field { width: 318px; height: 29px; box-sizing: border-box; border: 2px solid #bbb; background: #f0f0f0; }
.b-open { width: 77px; height: 28px; margin-left: 5px; white-space: nowrap; flex: none; }
.b-group {
  margin-top: 19px;
  height: 85px;
  width: 492px;
  box-sizing: border-box;
  border: 2px solid #c0c0c0;
  display: flex;
  flex-direction: column;
  padding: 11px 7px 0 8px;
  gap: 19px;
}
.warn { color: #ff4a4a; white-space: nowrap; font-size: 14.8px; }
.b-foot { display: flex; justify-content: space-between; align-items: center; margin-top: 10px; padding-left: 6px; width: 494px; box-sizing: border-box; }

/* annotation layer */
.marks { position: absolute; left: 0; top: -2px; pointer-events: none; }
.headline {
  position: absolute;
  left: 100px;
  top: 796px;
  font-size: 30px;
  line-height: 42px;
  color: #ff4040;
  white-space: nowrap;
}
.h-dll { font-size: 27px; letter-spacing: -2.5px; margin-right: 2px; }
.h-q { margin: 0 12px 0 6px; font-size: 26px; }
.h-q2 { font-size: 22px; margin-left: 20px; position: relative; top: -8px; }
</style>
